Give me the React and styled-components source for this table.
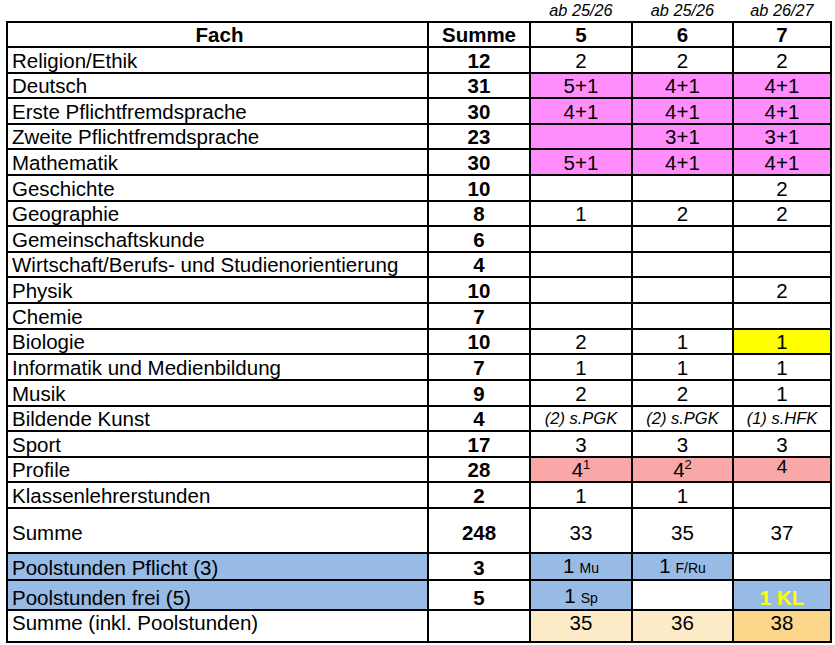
import React from "react";
import styled, { createGlobalStyle, css } from "styled-components";

const GlobalStyle = createGlobalStyle`
  html, body { margin: 0; padding: 0; background: #ffffff; }
  body { font-family: "Liberation Sans", Arial, sans-serif; color: #000; }
`;

const COLS = "421px 102px 102px 101px 98px";

const Page = styled.div`
  padding-left: 6px;
  width: 826px;
`;

const YearRow = styled.div`
  display: grid;
  grid-template-columns: ${COLS};
  padding-left: 2px;
  height: 21px;
`;

const YearLabel = styled.div`
  font-style: italic;
  font-size: 16.3px;
  line-height: 19px;
  padding-top: 1px;
  text-align: center;
  padding-right: 2px;
`;

const Sheet = styled.div`
  display: grid;
  grid-template-columns: ${COLS};
  grid-template-rows: 25px repeat(18, 25.61px) 45px 27px 30px 32px;
  border-left: 2px solid #000;
  border-top: 2px solid #000;
`;

const alignMap = { end: "flex-end", center: "center", start: "flex-start" };

const Cell = styled.div`
  box-sizing: border-box;
  border-right: 2px solid #000;
  border-bottom: 2px solid #000;
  background: ${(p) => p.$bg || "#ffffff"};
  display: flex;
  align-items: ${(p) => alignMap[p.$v || "end"]};
  justify-content: center;
  font-size: 20.5px;
  line-height: 22px;
  padding-top: ${(p) => (p.$v === "start" ? "1px" : p.$v === "center" ? "5px" : "0")};
  white-space: nowrap;
  overflow: hidden;
`;

const FachCell = styled(Cell)`
  justify-content: flex-start;
  padding-left: 4px;
  ${(p) => p.$head && css`justify-content: center; font-weight: bold;`}
`;

const SumCell = styled(Cell)`
  font-weight: bold;
`;

const GradeCell = styled(Cell)`
  ${(p) => p.$head && css`font-weight: bold;`}
`;

const Note = styled.span`
  font-style: italic;
  font-size: 16.5px;
  line-height: 20px;
  padding-bottom: 2px;
`;

const Sup = styled.sup`
  font-size: 13px;
  vertical-align: 8px;
  line-height: 0;
`;

const Small = styled.span`
  font-size: 14px;
  margin-left: 5px;
`;

const Highlight = styled.span`
  color: #ffff00;
  font-weight: bold;
`;

const PlainFour = styled.span`
  font-size: 19px;
  padding-bottom: 3px;
`;

const PINK = "#ff8dfc";
const YELLOW = "#ffff00";
const SALMON = "#f9a7a7";
const BLUE = "#97bbe5";
const CREAM = "#fdebc8";
const GOLD = "#fbd68b";

const rows = [
  { fach: "Religion/Ethik", sum: "12", g: ["2", "2", "2"] },
  { fach: "Deutsch", sum: "31", g: ["5+1", "4+1", "4+1"], bg: [PINK, PINK, PINK] },
  { fach: "Erste Pflichtfremdsprache", sum: "30", g: ["4+1", "4+1", "4+1"], bg: [PINK, PINK, PINK] },
  { fach: "Zweite Pflichtfremdsprache", sum: "23", g: ["", "3+1", "3+1"], bg: [PINK, PINK, PINK] },
  { fach: "Mathematik", sum: "30", g: ["5+1", "4+1", "4+1"], bg: [PINK, PINK, PINK] },
  { fach: "Geschichte", sum: "10", g: ["", "", "2"] },
  { fach: "Geographie", sum: "8", g: ["1", "2", "2"] },
  { fach: "Gemeinschaftskunde", sum: "6", g: ["", "", ""] },
  { fach: "Wirtschaft/Berufs- und Studienorientierung", sum: "4", g: ["", "", ""] },
  { fach: "Physik", sum: "10", g: ["", "", "2"] },
  { fach: "Chemie", sum: "7", g: ["", "", ""] },
  { fach: "Biologie", sum: "10", g: ["2", "1", "1"], bg: [null, null, YELLOW] },
  { fach: "Informatik und Medienbildung", sum: "7", g: ["1", "1", "1"] },
  { fach: "Musik", sum: "9", g: ["2", "2", "1"] },
  {
    fach: "Bildende Kunst",
    sum: "4",
    g: [<Note>(2) s.PGK</Note>, <Note>(2) s.PGK</Note>, <Note>(1) s.HFK</Note>],
  },
  { fach: "Sport", sum: "17", g: ["3", "3", "3"] },
  {
    fach: "Profile",
    sum: "28",
    g: [
      <span>4<Sup>1</Sup></span>,
      <span>4<Sup>2</Sup></span>,
      <PlainFour>4</PlainFour>,
    ],
    bg: [SALMON, SALMON, SALMON],
  },
  { fach: "Klassenlehrerstunden", sum: "2", g: ["1", "1", ""] },
  { fach: "Summe", sum: "248", g: ["33", "35", "37"], v: "center" },
  {
    fach: "Poolstunden Pflicht (3)",
    fachBg: BLUE,
    sum: "3",
    g: [
      <span>1<Small>Mu</Small></span>,
      <span>1<Small>F/Ru</Small></span>,
      "",
    ],
    bg: [BLUE, BLUE, null],
  },
  {
    fach: "Poolstunden frei (5)",
    fachBg: BLUE,
    sum: "5",
    g: [<span>1<Small>Sp</Small></span>, "", <Highlight>1 KL</Highlight>],
    bg: [BLUE, null, BLUE],
  },
  {
    fach: "Summe (inkl. Poolstunden)",
    sum: "",
    g: ["35", "36", "38"],
    bg: [CREAM, CREAM, GOLD],
    v: "start",
  },
];

export default function App() {
  return (
    <Page>
      <GlobalStyle />
      <YearRow>
        <div />
        <div />
        <YearLabel>ab 25/26</YearLabel>
        <YearLabel>ab 25/26</YearLabel>
        <YearLabel>ab 26/27</YearLabel>
      </YearRow>
      <Sheet>
        <FachCell $head>Fach</FachCell>
        <SumCell>Summe</SumCell>
        <GradeCell $head>5</GradeCell>
        <GradeCell $head>6</GradeCell>
        <GradeCell $head>7</GradeCell>
        {rows.map((r) => (
          <React.Fragment key={r.fach}>
            <FachCell $bg={r.fachBg} $v={r.v}>{r.fach}</FachCell>
            <SumCell $v={r.v}>{r.sum}</SumCell>
            {r.g.map((val, i) => (
              <GradeCell key={i} $bg={r.bg && r.bg[i]} $v={r.v}>
                {val}
              </GradeCell>
            ))}
          </React.Fragment>
        ))}
      </Sheet>
    </Page>
  );
}
